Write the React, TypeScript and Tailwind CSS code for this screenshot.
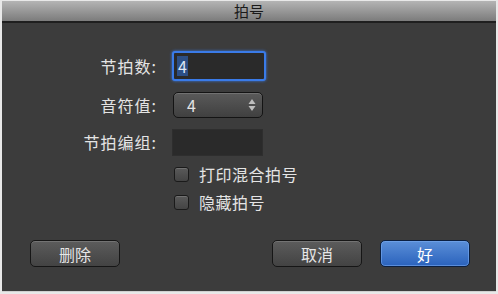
import React from 'react';

const font = "font-['Noto_Sans_CJK_SC','Noto_Sans',sans-serif]";

const Checkbox: React.FC<{ label: string }> = ({ label }) => (
  <label className="flex items-center gap-[10px] h-[28px]">
    <span className="w-[15px] h-[15px] rounded-[3px] border border-[#1a1a1a] bg-gradient-to-b from-[#5a5a5a] to-[#444] shadow-[inset_0_1px_0_rgba(255,255,255,0.15)]" />
    <span className="text-[16px] text-[#e4e4e4] tracking-[0.5px]">{label}</span>
  </label>
);

const Button: React.FC<{ label: string; primary?: boolean }> = ({ label, primary }) => (
  <button
    className={
      primary
        ? 'w-[90px] h-[27px] rounded-[5px] border border-[#0b1f40] bg-gradient-to-b from-[#5b8fd8] to-[#2a62bc] text-[16px] text-white shadow-[inset_0_0_0_1px_rgba(120,170,240,0.6)]'
        : 'w-[90px] h-[27px] rounded-[5px] border border-[#161616] bg-gradient-to-b from-[#5c5c5c] to-[#434343] text-[16px] text-[#e6e6e6] shadow-[inset_0_1px_0_rgba(255,255,255,0.15)]'
    }
  >
    {label}
  </button>
);

export default function App() {
  return (
    <div className={`w-[498px] h-[294px] bg-[#e8e8e8] pt-[1px] pl-[2px] ${font}`}>
      <div className="w-[494px] h-[291px] flex flex-col bg-[#3c3c3c] border-b border-[#d0d0d0]">
        {/* Title bar */}
        <div className="h-[22px] flex items-center justify-center bg-gradient-to-b from-[#b4b4b4] to-[#7c7c7c] border-b-[2px] border-[#1f1f1f] text-[15px] text-[#1a1a1a]">
          拍号
        </div>

        {/* Form */}
        <div className="flex flex-col pt-[28px]">
          <div className="flex items-center h-[30px]">
            <div className="w-[155px] text-right text-[16px] text-[#e4e4e4] tracking-[1px]">节拍数:</div>
            <div className="ml-[15px] w-[94px] h-[30px] rounded-[3px] border-[2px] border-[#3a7be8] shadow-[0_0_3px_#3a7be8] bg-[#2a2a2a] flex items-center px-[3px]">
              <span className="bg-[#2c4f86] text-[#dfe8f5] text-[16px] leading-[20px] px-[1px]">4</span>
            </div>
          </div>
          <div className="flex items-center h-[28px] mt-[10px]">
            <div className="w-[155px] text-right text-[16px] text-[#e4e4e4] tracking-[1px]">音符值:</div>
            <div className="ml-[16px] w-[90px] h-[26px] rounded-[5px] border border-[#141414] bg-gradient-to-b from-[#5a5a5a] to-[#404040] shadow-[inset_0_1px_0_rgba(255,255,255,0.15)] flex items-center pl-[13px] pr-[6px]">
              <span className="flex-1 text-[16px] text-[#e4e4e4]">4</span>
              <svg width="8" height="14" viewBox="0 0 8 14">
                <path d="M4 1 L7.5 6 L0.5 6 Z" fill="#bdbdbd" />
                <path d="M4 13 L7.5 8 L0.5 8 Z" fill="#bdbdbd" />
              </svg>
            </div>
          </div>
          <div className="flex items-center h-[28px] mt-[9px]">
            <div className="w-[155px] text-right text-[16px] text-[#e4e4e4] tracking-[1px]">节拍编组:</div>
            <div className="ml-[15px] w-[91px] h-[27px] border border-[#2e2e2e] bg-[#2a2a2a]" />
          </div>
          <div className="flex flex-col ml-[172px] mt-[4px]">
            <Checkbox label="打印混合拍号" />
            <Checkbox label="隐藏拍号" />
          </div>
        </div>

        {/* Buttons */}
        <div className="flex items-center mt-[24px] pl-[28px] pr-[26px]">
          <Button label="删除" />
          <div className="flex-1" />
          <Button label="取消" />
          <div className="w-[18px]" />
          <Button label="好" primary />
        </div>
      </div>
    </div>
  );
}
